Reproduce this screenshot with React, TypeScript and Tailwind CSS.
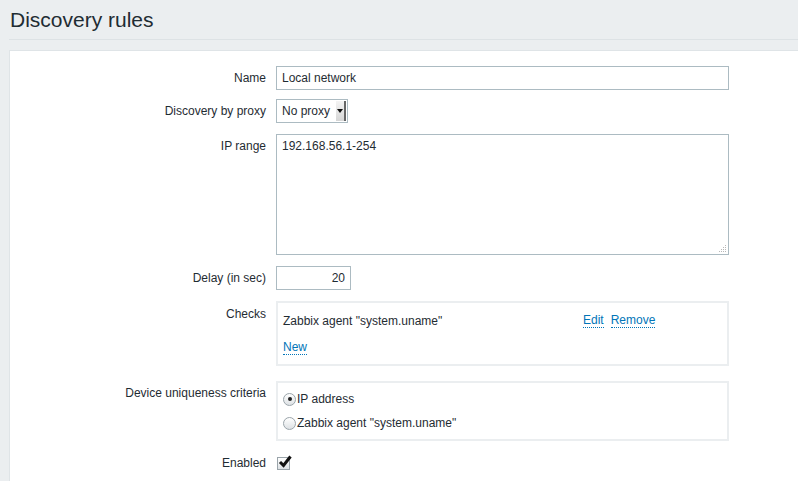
import React from "react";

const Label = ({ children, pt = "pt-[5px]" }: { children: React.ReactNode; pt?: string }) => (
  <div className={`w-[266px] shrink-0 pr-[10px] text-right leading-[14px] ${pt}`}>{children}</div>
);

const Link = ({ children }: { children: React.ReactNode }) => (
  <span className="cursor-pointer border-b border-dotted border-[#0275b8] leading-[13px] text-[#0275b8]">
    {children}
  </span>
);

const Radio = ({ checked }: { checked?: boolean }) => (
  <span className="mr-[1px] flex h-[13px] w-[13px] items-center justify-center rounded-full border border-[#9aa4aa] bg-gradient-to-b from-white to-[#dde1e4]">
    {checked && <span className="h-[4px] w-[4px] rounded-full bg-[#222]" />}
  </span>
);

const App = () => {
  return (
    <div className="h-screen w-full overflow-hidden bg-[#ebeef0] text-[12px] text-[#1f2c33] [font-family:'Liberation_Sans',Arial,sans-serif]">
      {/* Header */}
      <div className="ml-[9px] h-[40px] border-b border-[#dde2e5]">
        <h1 className="pl-[1px] pt-[8px] text-[21px] leading-[24px]">Discovery rules</h1>
      </div>

      {/* Form panel */}
      <div className="ml-[9px] mt-[10px] h-full border-l border-t border-[#dfe4e7] bg-white pt-[15px]">
        {/* Name */}
        <div className="flex">
          <Label>Name</Label>
          <div className="h-[24px] w-[453px] border border-[#acbbc2] px-[5px] leading-[22px]">Local network</div>
        </div>

        {/* Proxy */}
        <div className="mt-[9px] flex">
          <Label>Discovery by proxy</Label>
          <div className="flex h-[24px] w-[72px] items-center border border-[#acbbc2] pl-[5px]">
            <span className="flex-1 leading-[22px]">No proxy</span>
            <span className="mr-[1px] flex h-[20px] w-[10px] items-center justify-center border-r-2 border-[#666] bg-gradient-to-b from-[#f4f4f4] to-[#d6d6d6]">
              <span className="h-0 w-0 border-x-[3px] border-t-[4px] border-x-transparent border-t-[#111]" />
            </span>
          </div>
        </div>

        {/* IP range */}
        <div className="mt-[11px] flex">
          <Label>IP range</Label>
          <div className="relative h-[121px] w-[453px] border border-[#acbbc2] px-[5px] pt-[4px] leading-[14px]">
            192.168.56.1-254
            <svg className="absolute bottom-[1px] right-[1px]" width="9" height="9" viewBox="0 0 9 9">
              {[[7, 1], [5, 3], [7, 3], [3, 5], [5, 5], [7, 5], [1, 7], [3, 7], [5, 7], [7, 7]].map(([x, y]) => (
                <rect key={`${x}-${y}`} x={x} y={y} width="1" height="1" fill="#b8b8b8" />
              ))}
            </svg>
          </div>
        </div>

        {/* Delay */}
        <div className="mt-[11px] flex">
          <Label>Delay (in sec)</Label>
          <div className="h-[24px] w-[75px] border border-[#acbbc2] px-[5px] text-right leading-[22px]">20</div>
        </div>

        {/* Checks */}
        <div className="mt-[11px] flex">
          <Label pt="pt-[6px]">Checks</Label>
          <div className="h-[65px] w-[453px] border-2 border-[#ebeef0] px-[5px] pt-[11px]">
            <div className="flex leading-[14px]">
              <span className="w-[300px]">Zabbix agent "system.uname"</span>
              <span className="flex gap-[7px]">
                <Link>Edit</Link>
                <Link>Remove</Link>
              </span>
            </div>
            <div className="mt-[12px] leading-[14px]">
              <Link>New</Link>
            </div>
          </div>
        </div>

        {/* Device uniqueness */}
        <div className="mt-[15px] flex">
          <Label pt="pt-[5px]">Device uniqueness criteria</Label>
          <div className="h-[60px] w-[453px] border-2 border-[#ebeef0] px-[5px] pt-[9px]">
            <div className="flex h-[14px] items-center">
              <Radio checked />
              IP address
            </div>
            <div className="mt-[10px] flex h-[14px] items-center">
              <Radio />
              Zabbix agent "system.uname"
            </div>
          </div>
        </div>

        {/* Enabled */}
        <div className="mt-[14px] flex">
          <Label pt="pt-[1px]">Enabled</Label>
          <span className="relative ml-[1px] mt-[2px] h-[13px] w-[13px] border border-[#9aa4aa] bg-gradient-to-b from-white to-[#dde1e4]">
            <svg width="14" height="13" viewBox="0 0 14 13" className="absolute -top-[3px] left-[0px]">
              <path d="M2 7 L5.5 10.5 L12.5 1.5" fill="none" stroke="#111" strokeWidth="3" />
            </svg>
          </span>
        </div>
      </div>
    </div>
  );
};

export default App;
